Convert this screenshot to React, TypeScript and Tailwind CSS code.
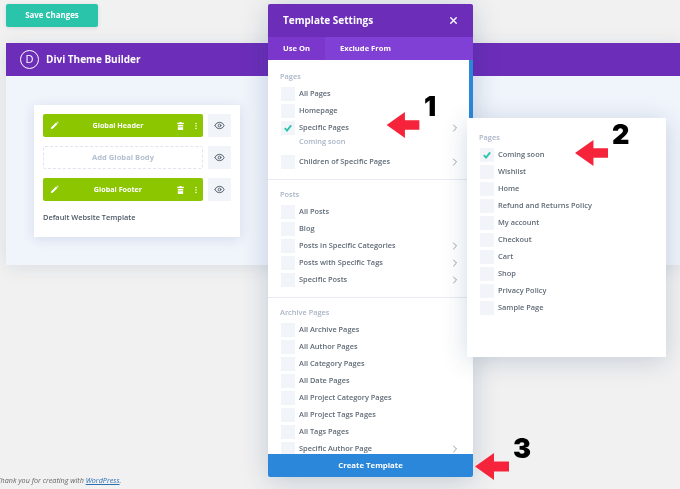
import { ChevronRight, Eye, X } from "lucide-react";

const pagesRows = [
  { label: "All Pages" },
  { label: "Homepage" },
  { label: "Specific Pages", checked: true, arrow: true, sub: "Coming soon" },
  { label: "Children of Specific Pages", arrow: true },
];
const postRows = [
  { label: "All Posts" },
  { label: "Blog" },
  { label: "Posts in Specific Categories", arrow: true },
  { label: "Posts with Specific Tags", arrow: true },
  { label: "Specific Posts", arrow: true },
];
const archiveRows = [
  { label: "All Archive Pages" },
  { label: "All Author Pages" },
  { label: "All Category Pages" },
  { label: "All Date Pages" },
  { label: "All Project Category Pages" },
  { label: "All Project Tags Pages" },
  { label: "All Tags Pages" },
  { label: "Specific Author Page", arrow: true },
];
const subPages = ["Coming soon", "Wishlist", "Home", "Refund and Returns Policy", "My account", "Checkout", "Cart", "Shop", "Privacy Policy", "Sample Page"];

type RowProps = { label: string; checked?: boolean; arrow?: boolean; sub?: string };

const Check = () => (
  <svg viewBox="0 0 14 14" className="w-[14px] h-[14px]">
    <path d="M3.8 7.2 L6 9.6 L10.2 4.4" fill="none" stroke="#29c4a9" strokeWidth="1.8" />
  </svg>
);

const Row = ({ label, checked, arrow, sub }: RowProps) => (
  <div>
    <div className="h-[17px] flex items-center">
      <span className="w-[14px] h-[14px] bg-[#f1f4f9] mr-[4px] shrink-0">{checked && <Check />}</span>
      <span className="text-[7.4px] font-semibold text-[#5f6a76]">{label}</span>
      {arrow && <ChevronRight className="ml-auto mr-[6px] text-[#6b7683]" size={12} strokeWidth={1.4} />}
    </div>
    {sub && <div className="h-[11px] mb-[6px] pl-[18px] text-[7.4px] leading-[11px] font-semibold text-[#a9b4c6]">{sub}</div>}
  </div>
);

const Heading = ({ children }: { children: string }) => (
  <div className="text-[7.4px] h-[9px] leading-[9px] -ml-px font-semibold text-[#a9b4c6] mb-[4px]">{children}</div>
);

const Pencil = () => (
  <svg viewBox="0 0 12 12" className="w-[9px] h-[9px] ml-[7px] shrink-0">
    <path d="M1 11 L1.6 8.4 L8 2 L10 4 L3.6 10.4 Z M8.8 1.2 L9.6 .6 L11.4 2.4 L10.8 3.2 Z" fill="white" />
  </svg>
);

const Trash = () => (
  <svg viewBox="0 0 10 12" className="w-[7px] h-[8px] shrink-0">
    <path d="M3.5 0 H6.5 V1.2 H10 V3 H0 V1.2 H3.5 Z M1 4 H9 V12 H1 Z" fill="white" />
    <path d="M1 7.2 H9" stroke="#8cc600" strokeWidth="1" />
  </svg>
);

const Dots = () => (
  <svg viewBox="0 0 3 10" className="w-[2px] h-[8px] shrink-0 ml-[11px] mr-[6px]">
    <circle cx="1.5" cy="1.2" r="1.2" fill="white" />
    <circle cx="1.5" cy="5" r="1.2" fill="white" />
    <circle cx="1.5" cy="8.8" r="1.2" fill="white" />
  </svg>
);

const EyeBox = () => (
  <div className="w-[23px] h-[23px] bg-[#f1f4f9] flex items-center justify-center text-[#4c5866] shrink-0">
    <Eye size={11} strokeWidth={2} />
  </div>
);

const GreenBar = ({ label }: { label: string }) => (
  <div className="flex gap-[5px]">
    <div className="w-[160px] h-[23px] bg-[#8cc600] rounded-[2px] flex items-center">
      <Pencil />
      <span className="flex-1 text-center text-[7.2px] font-bold text-white">{label}</span>
      <Trash />
      <Dots />
    </div>
    <EyeBox />
  </div>
);

const RedArrow = ({ className }: { className: string }) => (
  <svg viewBox="0 0 34 27" className={className}>
    <path d="M0 13.5 L19 0 L19 8.5 L34 8.5 L34 18.5 L19 18.5 L19 27 Z" fill="#f6243a" />
  </svg>
);

export default function App() {
  return (
    <div className="relative w-[680px] h-[489px] overflow-hidden bg-[#f1f1f1] flex flex-col pl-[6px] font-['Open_Sans',sans-serif] blur-[0.35px]">
      <button className="w-[92px] h-[23px] mt-[4px] bg-[#29c4a9] rounded-[2px] text-[7.9px] font-bold text-white shadow-[0_1px_4px_rgba(0,0,0,0.1)]">
        Save Changes
      </button>

      <div className="mt-[16px] h-[222px] bg-[#f0f4fb] shadow-[0_2px_18px_rgba(0,50,100,0.1)]">
        <div className="h-[33px] bg-[#6c2eb9] flex items-center pl-[14px] gap-[7px]">
          <span className="w-[19px] h-[19px] rounded-full border-[1.5px] border-white flex items-center justify-center text-[11px] text-white">D</span>
          <span className="text-[10px] font-bold text-white">Divi Theme Builder</span>
        </div>
        <div className="ml-[28px] mt-[29px] w-[206px] h-[132px] bg-white shadow-[0_2px_12px_rgba(0,50,120,0.12)] pt-[9px] px-[9px]">
          <GreenBar label="Global Header" />
          <div className="flex gap-[5px] mt-[9px]">
            <div className="w-[160px] h-[23px] border border-dashed border-[#dfe4ee] rounded-[2px] flex items-center justify-center text-[7.6px] font-bold text-[#b4bfd0]">
              Add Global Body
            </div>
            <EyeBox />
          </div>
          <div className="mt-[9px]">
            <GreenBar label="Global Footer" />
          </div>
          <div className="mt-[11px] text-[7.4px] font-semibold text-[#4c5866]">Default Website Template</div>
        </div>
      </div>

      <div className="mt-auto mb-[3px] -ml-[9px] text-[7.2px] italic text-[#666]">
        Thank you for creating with <span className="text-[#2b6fb3] underline">WordPress</span>.
      </div>

      {/* modal */}
      <div className="absolute left-[268px] top-[4px] w-[205px] h-[473px] flex flex-col rounded-[2px] overflow-hidden bg-white shadow-[0_4px_28px_rgba(0,50,100,0.2)] z-10">
        <div className="h-[33px] shrink-0 bg-[#6c2eb9] flex items-center justify-between pl-[15px] pr-[14px]">
          <span className="text-[10px] font-bold text-white">Template Settings</span>
          <X size={11} strokeWidth={3} className="text-white" />
        </div>
        <div className="h-[23px] shrink-0 bg-[#8040d5] flex text-[7.6px] font-bold text-white">
          <div className="w-[57px] flex items-center justify-center bg-[#7b36cc]">Use On</div>
          <div className="ml-[15px] flex items-center">Exclude From</div>
        </div>
        <div className="flex-1 min-h-0 flex">
          <div className="w-[201px] overflow-hidden pl-[13px] pr-[2px] pt-[12px]">
            <Heading>Pages</Heading>
            {pagesRows.map((r) => <Row key={r.label} {...r} />)}
            <div className="h-px bg-[#e8ecf2] -ml-[13px] mt-[9px] mb-[10px]" />
            <Heading>Posts</Heading>
            {postRows.map((r) => <Row key={r.label} {...r} />)}
            <div className="h-px bg-[#e8ecf2] -ml-[13px] mt-[9px] mb-[10px]" />
            <Heading>Archive Pages</Heading>
            {archiveRows.map((r) => <Row key={r.label} {...r} />)}
          </div>
          <div className="w-[4px] h-[58px] bg-[#2b87da]" />
        </div>
        <div className="h-[23px] shrink-0 bg-[#2b87da] flex items-center justify-center text-[7.8px] font-bold text-white">
          Create Template
        </div>
      </div>

      {/* page picker */}
      <div className="absolute left-[467px] top-[118px] w-[199px] h-[239px] bg-white shadow-[0_4px_24px_rgba(0,50,100,0.18)] pl-[13px] pt-[15px] z-20">
        <div className="mb-px">
          <Heading>Pages</Heading>
        </div>
        {subPages.map((p, i) => <Row key={p} label={p} checked={i === 0} />)}
      </div>

      <RedArrow className="absolute left-[386px] top-[112px] w-[34px] h-[26px] z-30" />
      <RedArrow className="absolute left-[575px] top-[139px] w-[33px] h-[28px] z-30" />
      <RedArrow className="absolute left-[475px] top-[453px] w-[34px] h-[27px] z-30" />
      <span className="absolute left-[424px] top-[90px] text-[27px] leading-[33px] font-black text-black font-['Inter',sans-serif] z-30">1</span>
      <span className="absolute left-[612px] top-[118px] text-[27px] leading-[33px] font-black text-black font-['Inter',sans-serif] z-30">2</span>
      <span className="absolute left-[513px] top-[432px] text-[27px] leading-[33px] font-black text-black font-['Inter',sans-serif] z-30">3</span>
    </div>
  );
}
